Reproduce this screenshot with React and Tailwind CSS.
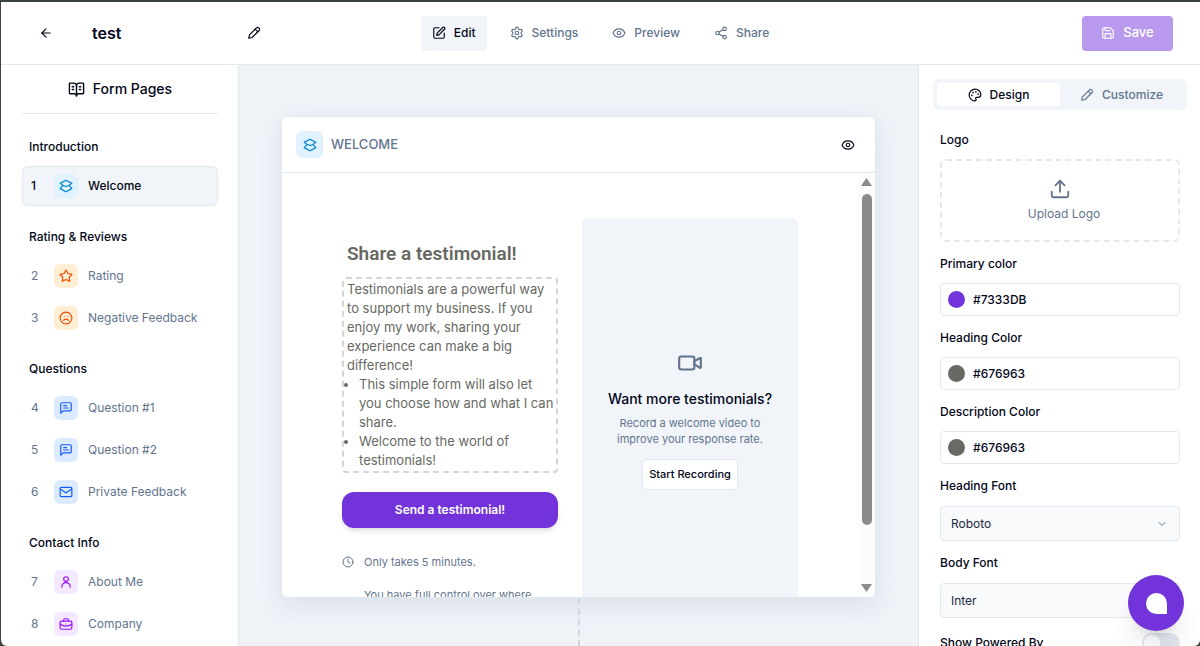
import {
	ArrowLeft,
	BookOpenText,
	ChevronDown,
	Clock,
	Eye,
	Frown,
	Mail,
	Palette,
	Save,
	Settings,
	Share2,
	SquarePen,
	Star,
	Upload,
	Video,
} from "lucide-react";

const Svg = ({ className, children }) => (
	<svg
		className={className}
		viewBox="0 0 24 24"
		fill="none"
		stroke="currentColor"
		strokeWidth="2"
		strokeLinecap="round"
		strokeLinejoin="round"
		aria-hidden="true"
	>
		{children}
	</svg>
);

const PencilIcon = ({ className }) => (
	<Svg className={className}>
		<path d="M3 21l1.300-5.800L16.300 3.200a2.600 2.600 0 0 1 3.700 0l.8.8a2.600 2.600 0 0 1 0 3.700L8.800 19.700 3 21z" />
		<path d="M14 5.500l4.500 4.500" />
	</Svg>
);

const LayersIcon = ({ className }) => (
	<Svg className={className}>
		<path d="M12 2 22 7.500 17 11 12 13 7 11 2 7.500z" />
		<path d="M7 11 2 16.500 12 22l10-5.500L17 11" />
	</Svg>
);

const MessageIcon = ({ className }) => (
	<Svg className={className}>
		<path d="M3 21V5a2 2 0 0 1 2-2h14a2 2 0 0 1 2 2v10a2 2 0 0 1-2 2H7z" />
		<path d="M8 8h5M8 12h8" />
	</Svg>
);

const PersonIcon = ({ className }) => (
	<Svg className={className}>
		<circle cx="12" cy="7" r="4" />
		<path d="M5 21v-1a7 7 0 0 1 14 0v1" />
	</Svg>
);

const BriefcaseIcon = ({ className }) => (
	<Svg className={className}>
		<rect x="2" y="7" width="20" height="14" rx="2" />
		<path d="M8 7V5a2 2 0 0 1 2-2h4a2 2 0 0 1 2 2v2M2 12c3 2.500 6.500 3.500 10 3.500s7-1 10-3.500M12 12v.01" />
	</Svg>
);

const groups = [
	{
		title: "Introduction",
		color: "bg-sky-100 text-sky-600",
		pages: [{ id: 1, name: "Welcome", icon: LayersIcon, active: true }],
	},
	{
		title: "Rating & Reviews",
		color: "bg-orange-100 text-orange-600",
		pages: [
			{ id: 2, name: "Rating", icon: Star },
			{ id: 3, name: "Negative Feedback", icon: Frown },
		],
	},
	{
		title: "Questions",
		color: "bg-blue-100 text-blue-600",
		pages: [
			{ id: 4, name: "Question #1", icon: MessageIcon },
			{ id: 5, name: "Question #2", icon: MessageIcon },
			{ id: 6, name: "Private Feedback", icon: Mail },
		],
	},
	{
		title: "Contact Info",
		color: "bg-purple-100 text-purple-600",
		pages: [
			{ id: 7, name: "About Me", icon: PersonIcon },
			{ id: 8, name: "Company", icon: BriefcaseIcon },
		],
	},
];

const Header = () => {
	const tab = "flex h-[35px] items-center gap-2 rounded px-[11px]";
	return (
		<header className="grid h-[63px] shrink-0 grid-cols-[1fr_auto_1fr] items-center border-b border-slate-200 font-medium">
			<div className="flex items-center pl-[38px]">
				<button type="button" aria-label="Back">
					<ArrowLeft className="size-[14px]" />
				</button>
				<h1 className="ml-[39px] w-[155px] text-base font-semibold">test</h1>
				<button type="button" aria-label="Rename form">
					<PencilIcon className="size-[14px]" />
				</button>
			</div>
			<nav className="flex gap-3 text-slate-500">
				<button type="button" className={`${tab} bg-slate-100 text-slate-950`}>
					<SquarePen className="size-[14px]" />
					Edit
				</button>
				<button type="button" className={tab}>
					<Settings className="size-[14px]" />
					Settings
				</button>
				<button type="button" className={tab}>
					<Eye className="size-[14px]" />
					Preview
				</button>
				<button type="button" className={tab}>
					<Share2 className="size-[14px]" />
					Share
				</button>
			</nav>
			<button
				type="button"
				className="mr-[27px] flex h-[35px] w-[91px] items-center justify-center gap-2 justify-self-end rounded bg-[#b999ed] text-[13px] text-white"
			>
				<Save className="size-[14px]" />
				Save
			</button>
		</header>
	);
};

const PageItem = ({ page, color }) => {
	const Icon = page.icon;
	return (
		<li>
			<button
				type="button"
				className={`flex h-10 w-full items-center rounded-md border px-2 text-left ${
					page.active
						? "border-slate-200 bg-slate-100 font-medium text-slate-950"
						: "border-transparent text-slate-500"
				}`}
			>
				<span className="w-[23px]">{page.id}</span>
				<span
					className={`mr-[10px] flex size-6 items-center justify-center rounded-md ${color}`}
				>
					<Icon className="size-[14px]" />
				</span>
				{page.name}
			</button>
		</li>
	);
};

const Sidebar = () => (
	<aside className="w-[238px] shrink-0 overflow-hidden border-r border-slate-200 pr-5 pl-[21px]">
		<h2 className="flex h-[49px] items-center justify-center gap-2 border-b border-slate-200 text-sm font-medium">
			<BookOpenText className="size-[17px]" />
			Form Pages
		</h2>
		<div className="mt-[23px] flex flex-col gap-[21px]">
			{groups.map((group) => (
				<section key={group.title}>
					<h3 className="mb-[9px] pl-[7px] leading-5 font-medium">
						{group.title}
					</h3>
					<ul className="flex flex-col gap-0.5">
						{group.pages.map((page) => (
							<PageItem key={page.id} page={page} color={group.color} />
						))}
					</ul>
				</section>
			))}
		</div>
	</aside>
);

const ScrollTrack = () => (
	<div className="flex w-[17px] shrink-0 flex-col items-center bg-[#fcfcfc] py-[5px]">
		<svg className="h-2 w-[11px] text-[#8b8b8b]" viewBox="0 0 11 8">
			<path d="M5.500 0 11 8H0z" fill="currentColor" />
		</svg>
		<div className="mt-2 h-[331px] w-[10px] rounded-full bg-[#8b8b8b]" />
		<svg className="mt-auto h-2 w-[11px] text-[#8b8b8b]" viewBox="0 0 11 8">
			<path d="M0 0h11L5.500 8z" fill="currentColor" />
		</svg>
	</div>
);

const WelcomeForm = () => (
	<div className="pt-6 text-slate-500">
		<h2 className="pl-[5px] font-[Roboto,sans-serif] text-[19px] leading-6 font-semibold text-[#676963]">
			Share a testimonial!
		</h2>
		<div className="mt-[11px] rounded border-2 border-dashed border-gray-300 py-px pl-[3px] text-[13px] leading-[19px] text-[#676963]">
			<p>
				Testimonials are a powerful way to support my business. If you enjoy my
				work, sharing your experience can make a big difference!
			</p>
			<ul className="list-disc pl-3">
				<li>
					This simple form will also let you choose how and what I can share.
				</li>
				<li>Welcome to the world of testimonials!</li>
			</ul>
		</div>
		<button
			type="button"
			className="mt-[19px] h-9 w-full rounded-xl bg-[#7333db] font-semibold text-white shadow-md"
		>
			Send a testimonial!
		</button>
		<ul className="mt-[25px] flex flex-col gap-[15px] text-[11px] leading-[18px]">
			<li className="flex items-center">
				<Clock className="mr-[10px] size-3" />
				Only takes 5 minutes.
			</li>
			<li className="pr-5 pl-[22px]">
				You have full control over where your testimonial is shared.
			</li>
		</ul>
	</div>
);

const Canvas = () => (
	<main className="flex min-w-0 flex-1 flex-col items-center overflow-hidden bg-[#eff3f8] px-[42px] pt-[51px]">
		<article className="w-full shrink-0 overflow-hidden rounded-md border border-slate-200 bg-white shadow-[0_8px_24px_rgba(100,116,139,0.14)]">
			<header className="flex h-14 items-center border-b border-slate-200 pr-5 pl-[14px]">
				<span className="mr-2 flex size-[27px] items-center justify-center rounded-md bg-sky-100 text-sky-600">
					<LayersIcon className="size-[14px]" />
				</span>
				<span className="text-[13px] font-medium text-slate-500">WELCOME</span>
				<button type="button" aria-label="Preview page" className="ml-auto">
					<Eye className="size-[14px]" />
				</button>
			</header>
			<div className="flex h-[424px]">
				<div className="flex-1 overflow-hidden pt-[45px]">
					<div className="mx-auto grid max-w-[456px] grid-cols-2 gap-6">
						<WelcomeForm />
						<div className="flex h-[440px] flex-col items-center rounded-md bg-slate-100 pt-[132px] text-center">
							<Video className="size-[26px] text-slate-500" />
							<h3 className="mt-[13px] text-sm leading-5 font-medium">
								Want more testimonials?
							</h3>
							<p className="mt-[6px] px-6 text-[11px] leading-4 text-slate-500">
								Record a welcome video to improve your response rate.
							</p>
							<button
								type="button"
								className="mt-3 h-[31px] rounded border border-slate-200 bg-white px-[6px] text-[11px] font-medium"
							>
								Start Recording
							</button>
						</div>
					</div>
				</div>
				<ScrollTrack />
			</div>
		</article>
		<div className="flex-1 border-l-2 border-dashed border-gray-300" />
	</main>
);

const ColorField = ({ id, label, value, swatch }) => (
	<div>
		<label htmlFor={id} className="block leading-5">
			{label}
		</label>
		<div className="mt-[9px] flex h-[33px] items-center gap-2 rounded border border-slate-200 px-[7px]">
			<span className={`size-[17px] shrink-0 rounded-full ${swatch}`} />
			<input
				id={id}
				defaultValue={value}
				className="w-full min-w-0 bg-transparent outline-none"
			/>
		</div>
	</div>
);

const FontField = ({ id, label, value }) => (
	<div>
		<label htmlFor={id} className="block leading-5">
			{label}
		</label>
		<div className="mt-[10px] grid items-center">
			<select
				id={id}
				defaultValue={value}
				className="col-start-1 row-start-1 h-[35px] w-full appearance-none rounded border border-slate-200 bg-slate-50 px-[10px] font-normal text-slate-800"
			>
				<option>Roboto</option>
				<option>Inter</option>
			</select>
			<ChevronDown className="pointer-events-none col-start-1 row-start-1 mr-3 size-3 justify-self-end text-slate-500" />
		</div>
	</div>
);

const DesignPanel = () => (
	<aside className="w-[282px] shrink-0 overflow-hidden border-l border-slate-200 px-[14px] pt-[14px] font-medium">
		<div className="mr-[-1px] grid h-[31px] grid-cols-2 rounded-md bg-slate-100 p-1 text-slate-500">
			<button
				type="button"
				className="flex items-center justify-center gap-2 rounded bg-white text-slate-950"
			>
				<Palette className="size-[14px]" />
				Design
			</button>
			<button type="button" className="flex items-center justify-center gap-2">
				<PencilIcon className="size-[14px]" />
				Customize
			</button>
		</div>
		<form className="mt-5 flex flex-col gap-3 pr-[6px] pl-[7px]">
			<div>
				<h3 className="leading-5">Logo</h3>
				<button
					type="button"
					className="mt-[9px] flex h-[83px] w-full flex-col items-center justify-center gap-1 rounded-md border-2 border-dashed border-slate-200 font-normal text-slate-500"
				>
					<Upload className="size-[22px]" />
					<span className="pl-2 leading-5">Upload Logo</span>
				</button>
			</div>
			<ColorField
				id="primary"
				label="Primary color"
				value="#7333DB"
				swatch="bg-[#7333db]"
			/>
			<ColorField
				id="heading"
				label="Heading Color"
				value="#676963"
				swatch="bg-[#676963]"
			/>
			<ColorField
				id="description"
				label="Description Color"
				value="#676963"
				swatch="bg-[#676963]"
			/>
			<FontField id="heading-font" label="Heading Font" value="Roboto" />
			<FontField id="body-font" label="Body Font" value="Inter" />
			<div className="flex h-[26px] items-center justify-between">
				<label htmlFor="powered">Show Powered By</label>
				<input
					id="powered"
					type="checkbox"
					role="switch"
					className="h-5 w-[38px] appearance-none rounded-full bg-slate-200 before:m-0.5 before:block before:size-4 before:rounded-full before:bg-white"
				/>
			</div>
		</form>
	</aside>
);

const App = () => {
	return (
		<div className="h-screen bg-[#3b4340]">
			<div className="flex h-full flex-col overflow-hidden border-t-2 border-l border-[#3b4340] font-[Inter,sans-serif] text-xs text-slate-950">
				<div className="flex min-h-0 flex-1 flex-col overflow-hidden rounded-b-md bg-white">
					<Header />
					<div className="flex min-h-0 flex-1">
						<Sidebar />
						<Canvas />
						<DesignPanel />
					</div>
				</div>
			</div>
			<button
				type="button"
				aria-label="Open chat"
				className="fixed right-4 bottom-[15px] flex size-14 items-center justify-center rounded-full bg-[#7333db] shadow-xl"
			>
				<span className="size-[21px] rounded-full rounded-br-none bg-white" />
			</button>
		</div>
	);
};

export default App;
